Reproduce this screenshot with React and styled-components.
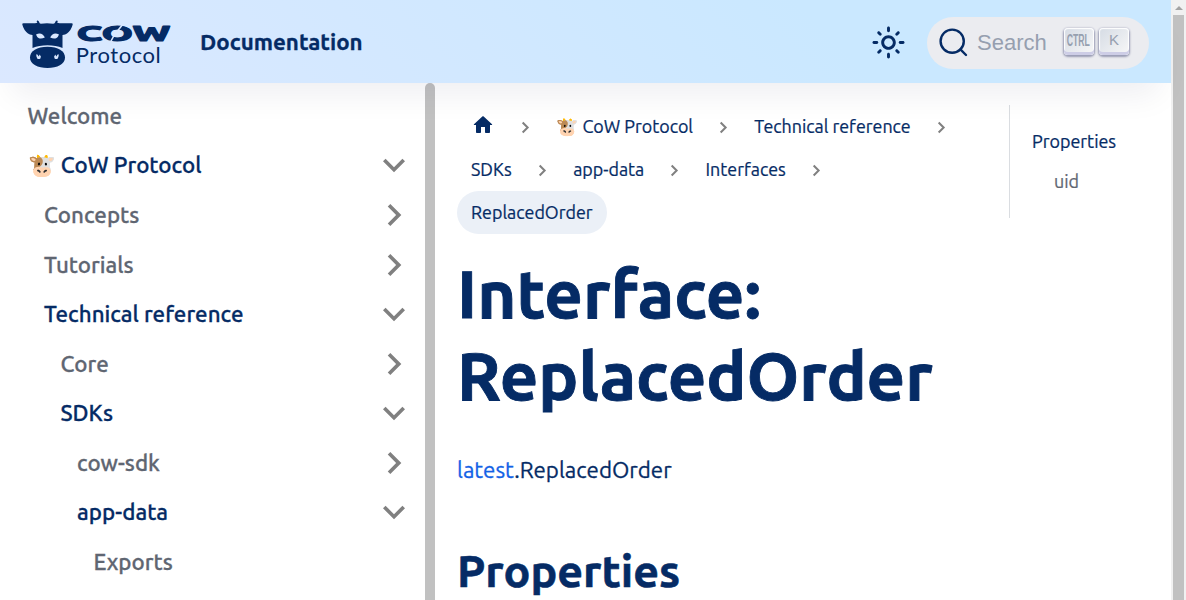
import React from "react";
import styled, { createGlobalStyle } from "styled-components";

const navy = "#052b65";
const gray = "#5f6672";

const GlobalStyle = createGlobalStyle`
  * { box-sizing: border-box; -webkit-text-stroke-width: 0.013em; }
  html, body { margin: 0; height: 600px; overflow: hidden; background: #fff; }
  body {
    font-family: Ubuntu, "Noto Sans", sans-serif;
    font-size: 22.33px;
    color: ${navy};
  }
`;

const Window = styled.div`
  display: flex;
  width: 1186px;
  height: 600px;
  overflow: hidden;
`;

const Page = styled.div`
  display: flex;
  flex-direction: column;
  width: 1171px;
  height: 600px;
`;

const PageScrollbar = styled.div`
  display: flex;
  flex-direction: column;
  align-items: center;
  width: 15px;
  background: #f1f1f1;
`;

const ScrollArrow = styled.div`
  width: 0;
  height: 0;
  margin: 6px 0 5px;
  border: 4px solid transparent;
  border-top: 0;
  border-bottom-color: #a3a3a3;
`;

const ScrollThumb = styled.div`
  flex: 1;
  width: 11px;
  background: #c1c1c1;
`;

const Header = styled.header`
  position: relative;
  z-index: 2;
  display: flex;
  align-items: center;
  flex: none;
  height: 83px;
  padding: 0 22px;
  background: linear-gradient(45deg, #dbe8ff 0%, #cae8ff 70%, #cae8ff 100%);
  box-shadow: 0 24px 32px -12px rgba(20, 22, 60, 0.065);
`;

const Logo = styled.svg`
  display: block;
  width: 150px;
  height: 50px;
  margin-top: 6px;
`;

const Wordmark = styled.text`
  fill: ${navy};
  stroke: ${navy};
  stroke-width: 1px;
  stroke-linejoin: round;
  -webkit-text-stroke-width: 1px;
  font-family: Ubuntu, sans-serif;
  font-size: 21.5px;
  font-weight: 800;
`;

const LogoSubtitle = styled.text`
  fill: ${navy};
  -webkit-text-stroke-width: 0;
  font-family: Lato, sans-serif;
  font-size: 22px;
`;

const NavTitle = styled.a`
  margin-left: 28px;
  font-weight: 700;
  line-height: 28px;
`;

const ThemeButton = styled.div`
  display: flex;
  margin-top: 2px;
  margin-left: auto;
  margin-right: 21px;
  svg { display: block; }
`;

const SearchBox = styled.div`
  display: flex;
  align-items: center;
  width: 222px;
  height: 52px;
  margin-top: 3px;
  padding: 0 20px 0 11px;
  border-radius: 26px;
  background: #ebecf0;
`;

const SearchText = styled.span`
  flex: 1;
  padding-left: 9px;
  font: 22px/26px "Liberation Sans", Arial, sans-serif;
  -webkit-text-stroke-width: 0;
  color: #969faf;
`;

const Key = styled.kbd`
  display: flex;
  align-items: center;
  justify-content: center;
  width: 30px;
  height: 27px;
  margin: 0 0 3px 5.5px;
  padding-bottom: ${(p) => (p.$narrow ? 1 : 4)}px;
  border-radius: 4px;
  background: linear-gradient(-225deg, #d5dbe4, #f8f8f8);
  box-shadow: inset 0 -3px 0 0 #cdcde6, inset 0 0 1px 1px #fff,
    0 1px 2px 1px rgba(30, 35, 90, 0.4);
  font: ${(p) => (p.$narrow ? "bold 16px" : "15px")} "Liberation Sans", Arial, sans-serif;
  color: #969faf;
  span {
    display: block;
    -webkit-text-stroke-width: 0;
    transform: ${(p) => (p.$narrow ? "scaleX(0.54)" : "none")};
  }
`;

const Body = styled.div`
  display: flex;
  flex: 1;
  min-height: 0;
`;

const Sidebar = styled.aside`
  display: flex;
  width: 435px;
  flex: none;
`;

const Menu = styled.ul`
  flex: 1;
  margin: 0;
  padding: 8.1px 9px 0 11px;
  list-style: none;
`;

const SidebarThumb = styled.div`
  width: 10px;
  border-radius: 5px 5px 0 0;
  background: #c1c1c1;
`;

const MenuRow = styled.li`
  display: flex;
  align-items: center;
  justify-content: space-between;
  height: 49.55px;
  padding-left: ${(p) => 16.5 + p.$level * 16.5}px;
  font-weight: 500;
  line-height: 28px;
  color: ${(p) => (p.$active ? navy : gray)};
`;

const Caret = styled.svg`
  display: block;
  width: 44px;
  height: 44px;
  fill: #808080;
  transform: rotate(${(p) => (p.$open ? 180 : 90)}deg);
`;

const Main = styled.main`
  display: flex;
  flex: 1;
  padding: 22px 22px 0;
`;

const Article = styled.article`
  width: 515px;
  flex: none;
`;

const Breadcrumbs = styled.nav`
  display: flex;
  flex-wrap: wrap;
`;

const Crumb = styled.span`
  display: flex;
  align-items: center;
  height: 43px;
  padding: 0 14px 1px;
  border-radius: 22px;
  font-size: 17.87px;
  white-space: pre;
  background: ${(p) => (p.$current ? "#ebf0f7" : "transparent")};
`;

const HomeIcon = styled.svg`
  display: block;
  width: 24px;
  height: 24px;
  margin-bottom: 2px;
  fill: ${navy};
`;

const Separator = styled.svg`
  display: block;
  width: 33.3px;
  height: 43px;
  fill: none;
  stroke: #808080;
  stroke-width: 2;
`;

const Title = styled.h1`
  margin: 18px 0 0;
  font-size: 67.1px;
  font-weight: 700;
  line-height: 82px;
`;

const Text = styled.p`
  margin: 36px 0 0;
  line-height: 36px;
`;

const Link = styled.a`
  color: #1362e6;
`;

const SubTitle = styled.h2`
  margin: 54px 0 0;
  font-size: 44.8px;
  font-weight: 700;
  line-height: 56px;
`;

const Toc = styled.nav`
  height: 113px;
  margin-left: 37px;
  padding: 16px 0 0 22px;
  border-left: 1px solid #dadde1;
  font-size: 17.92px;
`;

const TocItem = styled.div`
  height: 40px;
  padding-left: ${(p) => (p.$nested ? 22 : 0)}px;
  line-height: 41px;
  color: ${(p) => (p.$nested ? gray : navy)};
`;

const menu = [
  { label: "Welcome", level: 0 },
  { label: "🐮 CoW Protocol", level: 0, caret: true, open: true },
  { label: "Concepts", level: 1, caret: true },
  { label: "Tutorials", level: 1, caret: true },
  { label: "Technical reference", level: 1, caret: true, open: true },
  { label: "Core", level: 2, caret: true },
  { label: "SDKs", level: 2, caret: true, open: true },
  { label: "cow-sdk", level: 3, caret: true },
  { label: "app-data", level: 3, caret: true, open: true },
  { label: "Exports", level: 4 },
];

const crumbs = ["🐮 CoW Protocol", "Technical reference", "SDKs", "app-data", "Interfaces"];

function CowLogo() {
  return (
    <Logo viewBox="0 0 150 50">
      <g fill={navy}>
        <path d="M0.3 4.6 Q0 3.2 1.6 3.2 L13 3.2 Q14.6 3.2 15.4 2.8 Q14 1.4 15.2 0.6 Q16.8 0.4 17.2 2.2 Q17.4 3.4 18.8 3.7 Q25 2.9 31.2 3.7 Q33 3.4 33.2 2.2 Q33.6 0.4 35.2 0.6 Q36.3 1.4 35.2 2.8 Q36 3.2 37.6 3.2 L49.5 3.2 Q51 3.2 50.7 4.6 Q49.2 10.5 45 13.5 Q43.5 14.8 40.5 15 L40.5 28 Q34 25.2 25.5 25.2 Q17 25.2 10.5 28 L10.5 15 Q7.5 14.8 6 13.5 Q1.8 10.5 0.3 4.6Z" />
        <path d="M25.5 26.8 C36 26.8 43 31 43 37.6 C43 44.4 35.2 48 25.5 48 C15.8 48 8 44.4 8 37.6 C8 31 15 26.8 25.5 26.8Z" />
      </g>
      <g fill="#dae8ff">
        <path d="M14 14.4 Q18 12.8 20.5 14.5 Q22.3 16 22.8 17.6 Q18.8 19.2 16.5 17.9 Q14.8 16.8 14 14.4Z" />
        <path d="M37 14.4 Q33 12.8 30.5 14.5 Q28.7 16 28.2 17.6 Q32.2 19.2 34.5 17.9 Q36.2 16.8 37 14.4Z" />
        <path d="M14.4 34.2 Q15.6 33.8 16.2 35.8 L16.8 36.6 L17.6 34.6 Q19.8 36.6 18.4 38.4 Q16.8 39.8 15.2 38.4 Q13.8 36.6 14.4 34.2Z" />
        <path d="M36.6 34.2 Q35.4 33.8 34.8 35.8 L34.2 36.6 L33.4 34.6 Q31.2 36.6 32.6 38.4 Q34.2 39.8 35.8 38.4 Q37.2 36.6 36.6 34.2Z" />
      </g>
      <Wordmark x="54.5" y="20.7" textLength="94" lengthAdjust="spacingAndGlyphs">
        COW
      </Wordmark>
      <path d="M101 4 L95.5 11 M92.5 14.5 L88 23" stroke="#d9e8ff" strokeWidth="1.6" />
      <LogoSubtitle x="53.8" y="43" textLength="85">
        Protocol
      </LogoSubtitle>
    </Logo>
  );
}

function SunIcon() {
  return (
    <svg width="35" height="35" viewBox="0 0 24 24" fill={navy}>
      <path d="M12,9c1.65,0,3,1.35,3,3s-1.35,3-3,3s-3-1.35-3-3S10.35,9,12,9 M12,7c-2.76,0-5,2.24-5,5s2.24,5,5,5s5-2.24,5-5 S14.76,7,12,7L12,7z M2,13l2,0c0.55,0,1-0.45,1-1s-0.45-1-1-1l-2,0c-0.55,0-1,0.45-1,1S1.45,13,2,13z M20,13l2,0c0.55,0,1-0.45,1-1 s-0.45-1-1-1l-2,0c-0.55,0-1,0.45-1,1S19.45,13,20,13z M11,2v2c0,0.55,0.45,1,1,1s1-0.45,1-1V2c0-0.55-0.45-1-1-1S11,1.45,11,2z M11,20v2c0,0.55,0.45,1,1,1s1-0.45,1-1v-2c0-0.55-0.45-1-1-1C11.45,19,11,19.45,11,20z M5.99,4.58c-0.39-0.39-1.03-0.39-1.41,0 c-0.39,0.39-0.39,1.03,0,1.41l1.06,1.06c0.39,0.39,1.03,0.39,1.41,0s0.39-1.03,0-1.41L5.99,4.58z M18.36,16.95 c-0.39-0.39-1.03-0.39-1.41,0c-0.39,0.39-0.39,1.03,0,1.41l1.06,1.06c0.39,0.39,1.03,0.39,1.41,0c0.39-0.39,0.39-1.03,0-1.41 L18.36,16.95z M19.42,5.99c0.39-0.39,0.39-1.03,0-1.41c-0.39-0.39-1.03-0.39-1.41,0l-1.06,1.06c-0.39,0.39-0.39,1.03,0,1.41 s1.03,0.39,1.41,0L19.42,5.99z M7.05,18.36c0.39-0.39,0.39-1.03,0-1.41c-0.39-0.39-1.03-0.39-1.41,0l-1.06,1.06 c-0.39,0.39-0.39,1.03,0,1.41s1.03,0.39,1.41,0L7.05,18.36z" />
    </svg>
  );
}

function SearchIcon() {
  return (
    <svg width="30" height="30" viewBox="0 0 30 30" fill="none" stroke={navy} strokeWidth="2.4" strokeLinecap="round">
      <circle cx="14.2" cy="13.2" r="11.6" />
      <path d="M22.4 21.4 L28 27" />
    </svg>
  );
}

export default function App() {
  return (
    <Window>
      <GlobalStyle />
      <Page>
        <Header>
          <CowLogo />
          <NavTitle>Documentation</NavTitle>
          <ThemeButton>
            <SunIcon />
          </ThemeButton>
          <SearchBox>
            <SearchIcon />
            <SearchText>Search</SearchText>
            <Key $narrow>
              <span>CTRL</span>
            </Key>
            <Key>
              <span>K</span>
            </Key>
          </SearchBox>
        </Header>
        <Body>
          <Sidebar>
            <Menu>
              {menu.map((item) => (
                <MenuRow key={item.label} $level={item.level} $active={item.open}>
                  {item.label}
                  {item.caret && (
                    <Caret $open={item.open} viewBox="0 0 24 24">
                      <path d="M7.41 15.41L12 10.83l4.59 4.58L18 14l-6-6-6 6z" />
                    </Caret>
                  )}
                </MenuRow>
              ))}
            </Menu>
            <SidebarThumb />
          </Sidebar>
          <Main>
            <Article>
              <Breadcrumbs>
                <Crumb>
                  <HomeIcon viewBox="0 0 24 24">
                    <path d="M10 19v-5h4v5c0 .55.45 1 1 1h3c.55 0 1-.45 1-1v-7h1.7c.46 0 .68-.57.33-.87L12.67 3.6c-.38-.34-.96-.34-1.34 0l-8.36 7.53c-.34.3-.13.87.33.87H5v7c0 .55.45 1 1 1h3c.55 0 1-.45 1-1z" />
                  </HomeIcon>
                </Crumb>
                {crumbs.map((label) => (
                  <React.Fragment key={label}>
                    <Separator viewBox="0 0 33 43">
                      <path d="M13.5 17.5 L18.5 22.5 L13.5 27.5" />
                    </Separator>
                    <Crumb>{label}</Crumb>
                  </React.Fragment>
                ))}
                <Separator viewBox="0 0 33 43">
                  <path d="M13.5 17.5 L18.5 22.5 L13.5 27.5" />
                </Separator>
                <Crumb $current>ReplacedOrder</Crumb>
              </Breadcrumbs>
              <Title>Interface: ReplacedOrder</Title>
              <Text>
                <Link>latest</Link>.ReplacedOrder
              </Text>
              <SubTitle>Properties</SubTitle>
            </Article>
            <Toc>
              <TocItem>Properties</TocItem>
              <TocItem $nested>uid</TocItem>
            </Toc>
          </Main>
        </Body>
      </Page>
      <PageScrollbar>
        <ScrollArrow />
        <ScrollThumb />
      </PageScrollbar>
    </Window>
  );
}
